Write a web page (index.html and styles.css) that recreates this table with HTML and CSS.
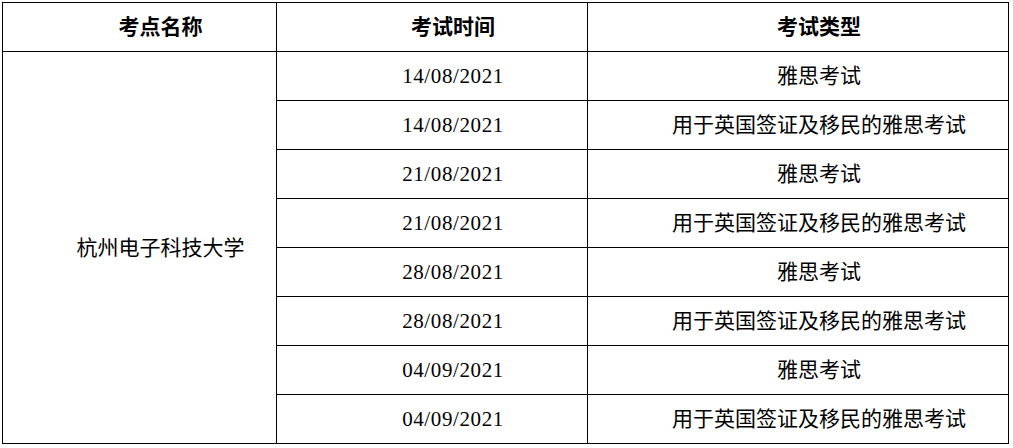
FILE: index.html
```html
<!DOCTYPE html>
<html lang="zh-CN">
<head>
<meta charset="utf-8">
<title>考点安排</title>
<link rel="stylesheet" href="styles.css">
</head>
<body>
<table class="exam-table">
  <colgroup>
    <col class="col-site">
    <col class="col-date">
    <col class="col-type">
  </colgroup>
  <thead>
    <tr>
      <th>考点名称</th>
      <th>考试时间</th>
      <th>考试类型</th>
    </tr>
  </thead>
  <tbody>
    <tr>
      <td class="site" rowspan="8">杭州电子科技大学</td>
      <td class="date">14/08/2021</td>
      <td>雅思考试</td>
    </tr>
    <tr>
      <td class="date">14/08/2021</td>
      <td>用于英国签证及移民的雅思考试</td>
    </tr>
    <tr>
      <td class="date">21/08/2021</td>
      <td>雅思考试</td>
    </tr>
    <tr>
      <td class="date">21/08/2021</td>
      <td>用于英国签证及移民的雅思考试</td>
    </tr>
    <tr>
      <td class="date">28/08/2021</td>
      <td>雅思考试</td>
    </tr>
    <tr>
      <td class="date">28/08/2021</td>
      <td>用于英国签证及移民的雅思考试</td>
    </tr>
    <tr>
      <td class="date">04/09/2021</td>
      <td>雅思考试</td>
    </tr>
    <tr>
      <td class="date">04/09/2021</td>
      <td>用于英国签证及移民的雅思考试</td>
    </tr>
  </tbody>
</table>
</body>
</html>
```
FILE: styles.css
```css
html, body {
  margin: 0;
  padding: 0;
  background: #ffffff;
}

body {
  padding: 2px 0 0 2px;
  font-family: "Liberation Serif", "Noto Sans CJK SC", serif;
  font-size: 21px;
  color: #000;
}

.exam-table {
  border-collapse: collapse;
  table-layout: fixed;
  width: 1006px;
}

.col-site { width: 274px; }
.col-date { width: 311px; }
.col-type { width: 421px; }

.exam-table th,
.exam-table td {
  border: 1px solid #000;
  height: 48px;
  padding: 0;
  text-align: center;
  text-indent: 2em;
  vertical-align: middle;
  line-height: 24px;
  white-space: nowrap;
}

.exam-table th {
  font-weight: 700;
}

.exam-table td.date {
  letter-spacing: 0.6px;
}
```
